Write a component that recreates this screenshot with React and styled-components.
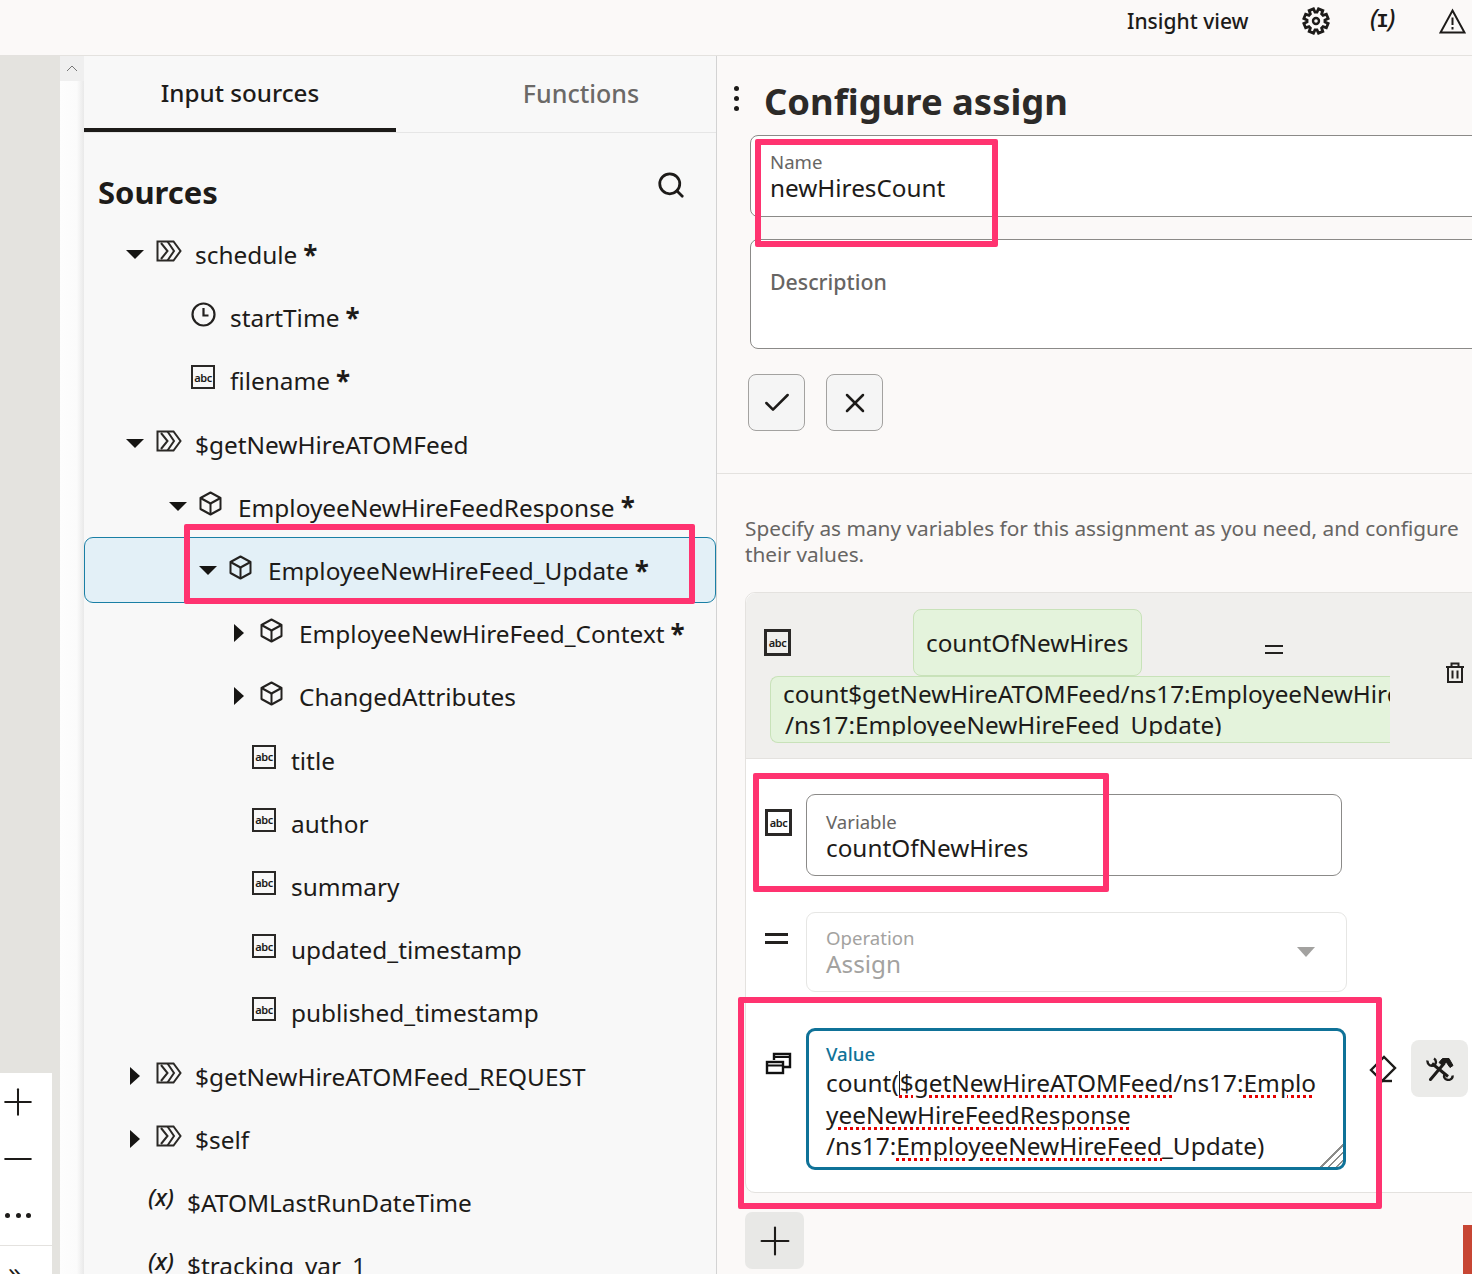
import React from 'react'
import styled, { createGlobalStyle } from 'styled-components'
import { Search, Check, X, Plus, Minus } from 'lucide-react'

const INK = '#1d1b19'
const FONT = '"Noto Sans", "Open Sans", Arial, sans-serif'

const GlobalStyle = createGlobalStyle`
    html, body {
        margin: 0;
        padding: 0;
        background: #fbf9f8;
    }
    body {
        font-family: ${FONT};
        color: ${INK};
        overflow: hidden;
    }
    * { box-sizing: border-box; }
`

/* ---------- icons ---------- */

function SourceIcon() {
    return (
        <svg width="26" height="22" viewBox="0 0 26 22" fill="none" stroke="#2b2926" strokeWidth="2">
            <path d="M1.5 1.5H17.5L24.5 11L17.5 20.5H1.5Z" />
            <path d="M11.5 1.5L18 11L11.5 20.5" />
            <path d="M5 3L11.5 11L5 19" />
        </svg>
    )
}

function CubeIcon() {
    return (
        <svg width="23" height="25" viewBox="0 0 23 25" fill="none" stroke="#23211f" strokeWidth="2" strokeLinejoin="round">
            <path d="M11.5 1.5L21.5 7V18L11.5 23.5L1.5 18V7Z" />
            <path d="M1.5 7L11.5 12.5L21.5 7" />
            <path d="M11.5 12.5V23.5" />
        </svg>
    )
}

function ClockIcon() {
    return (
        <svg width="25" height="25" viewBox="0 0 25 25" fill="none" stroke="#23211f" strokeWidth="2.2">
            <circle cx="12.5" cy="12.5" r="11" />
            <path d="M12.5 6V13.5H17.5" />
        </svg>
    )
}

// toothed outline for the settings cog
function gearPath(teeth, outer, inner, c) {
    const step = (Math.PI * 2) / teeth
    const pts = []
    for (let i = 0; i < teeth; i++) {
        const a = i * step + step / 2
        const at = (r, d) => [c + r * Math.cos(a + d), c + r * Math.sin(a + d)]
        pts.push(at(inner, -step * 0.36), at(outer, -step * 0.24), at(outer, step * 0.24), at(inner, step * 0.36))
    }
    return 'M' + pts.map(p => p[0].toFixed(2) + ' ' + p[1].toFixed(2)).join('L') + 'Z'
}

function GearIcon() {
    return (
        <svg width="28" height="28" viewBox="0 0 28 28" fill="none" stroke="#1d1b19" strokeWidth="2.8" strokeLinejoin="miter">
            <path d={gearPath(8, 12.4, 9, 14)} />
            <circle cx="14" cy="14" r="3" strokeWidth="2.4" />
        </svg>
    )
}

function WarningIcon() {
    return (
        <svg width="27" height="26" viewBox="0 0 27 26" fill="none" stroke="#1d1b19" strokeWidth="2">
            <path d="M13.5 2.5L25.5 24.5H1.5Z" />
            <path d="M13.5 9.5V17" />
            <path d="M13.5 19V21.5" />
        </svg>
    )
}

function TrashIcon() {
    return (
        <svg width="20" height="21" viewBox="0 0 20 21" fill="none" stroke="#23211f" strokeWidth="2">
            <path d="M1 5H19" />
            <path d="M6.5 5V1.5H13.5V5" />
            <path d="M3 5V20H17V5" />
            <path d="M7.5 8.5V16.5M12.5 8.5V16.5" />
        </svg>
    )
}

function StackIcon() {
    return (
        <svg width="27" height="23" viewBox="0 0 27 23" fill="none" stroke="#111" strokeWidth="2.4">
            <path d="M9 8V2H25V15H19" />
            <rect x="2" y="10" width="16" height="11" />
            <path d="M2 13.5H18M9 5H25" strokeWidth="2" />
        </svg>
    )
}

function EraserIcon() {
    return (
        <svg width="28" height="28" viewBox="0 0 28 28" fill="none" stroke="#1d1b19" strokeWidth="2.4" strokeLinejoin="miter">
            <path d="M2 15L15 2L26 13L13 26Z" />
            <path d="M13 26H23" />
        </svg>
    )
}

function ToolsIcon() {
    return (
        <svg width="28" height="24" viewBox="0 0 28 24" fill="none" stroke="#1d1b19" strokeLinejoin="round">
            <path d="M13 5.5L16.5 1.5H23L27 8.5L24 10.5L20.5 5.5H18L16 8Z" fill="#1d1b19" strokeWidth="1" />
            <path d="M18 6.5L4.5 22.5" strokeWidth="3" strokeLinecap="round" />
            <path d="M6 6.5L22 19.5" strokeWidth="3" />
            <path d="M1.5 3.5C1 8 5.5 10 8.5 8C10.5 6.5 10.5 3 8 1.5" strokeWidth="2.4" />
            <path d="M26.5 18.5C27 22.5 22.5 24 19.5 22C17.5 20.5 17.5 18 19.5 16.5" strokeWidth="2.4" />
        </svg>
    )
}

/* ---------- layout ---------- */

const Page = styled.div`
    position: relative;
    width: 1472px;
    height: 1274px;
    overflow: hidden;
    display: flex;
    flex-direction: column;
    background: #fbf9f8;
`

const TopBar = styled.header`
    flex: 0 0 56px;
    display: flex;
    align-items: flex-start;
    border-bottom: 1px solid #e4e2df;
    background: #fbf9f8;
    padding: 6px 0 0 1127px;
    white-space: nowrap;
`

const InsightLabel = styled.span`
    font-size: 21px;
    font-weight: 500;
    line-height: 30px;
    width: 175px;
`

const TopIcon = styled.span`
    display: inline-flex;
    width: ${p => p.$width}px;
    height: 30px;
    align-items: center;
`

const InputGlyph = styled.span`
    font-size: 25px;
    font-style: italic;
    font-weight: 500;
    line-height: 26px;
    margin-top: -4px;
`

const InputSlab = styled.span`
    font-family: "Liberation Mono", monospace;
    font-size: 20px;
    font-style: normal;
    font-weight: 700;
    margin: 0 -1px;
`

const Body = styled.div`
    flex: 1;
    display: flex;
    min-height: 0;
`

const Rail = styled.div`
    flex: 0 0 60px;
    padding-top: 1017px;
    background: #e4e3df;
`

const ZoomPanel = styled.div`
    width: 52px;
    background: #fff;
`

const ZoomButton = styled.div`
    width: 36px;
    height: 57px;
    display: flex;
    align-items: center;
    justify-content: center;
    color: #1d1b19;
    svg { flex: none; }
`

const Dot = styled.i`
    flex: none;
    width: 5px;
    height: 5px;
    border-radius: 50%;
    background: #1d1b19;
`

const DotsRow = styled.span`
    display: flex;
    gap: 5.5px;
`

const ZoomExpand = styled.div`
    border-top: 1px solid #e4e2df;
    margin-top: 1px;
    padding-left: 8px;
    font-size: 26px;
    line-height: 50px;
    height: 46px;
    overflow: hidden;
`

const ScrollTrack = styled.div`
    flex: 0 0 24px;
    background: linear-gradient(90deg, #fdfdfd 0%, #fbfbfb 70%, #e9e9e9 100%);
`

const ScrollUp = styled.div`
    height: 25px;
    background: #efefef;
    display: flex;
    align-items: center;
    justify-content: center;
`

const SourcesPanel = styled.aside`
    flex: 0 0 633px;
    background: #f8f8f8;
    border-right: 1px solid #d3d3d3;
    display: flex;
    flex-direction: column;
    min-height: 0;
`

const Tabs = styled.nav`
    flex: 0 0 77px;
    display: grid;
    grid-template-columns: 312px 1fr;
    border-bottom: 1px solid #e6e6e6;
`

const Tab = styled.div`
    display: flex;
    justify-content: center;
    padding: 20px 0 0 ${p => (p.$active ? 0 : 50)}px;
    font-size: ${p => (p.$active ? 24.2 : 25)}px;
    line-height: 34px;
    font-weight: 500;
    color: ${p => (p.$active ? INK : '#6b6967')};
    border-bottom: ${p => (p.$active ? `4px solid ${INK}` : 'none')};
    height: 76px;
`

const SourcesHead = styled.div`
    flex: 0 0 90px;
    display: flex;
    justify-content: space-between;
    padding: 37px 30px 0 14px;
`

const SourcesTitle = styled.h2`
    margin: 0;
    font-size: 31px;
    line-height: 44px;
    font-weight: 700;
`

const Tree = styled.div`
    flex: 1;
    overflow: hidden;
`

const Row = styled.div`
    position: relative;
    height: 63.2px;
    display: flex;
    align-items: center;
    padding-left: ${p => p.$indent}px;
    font-size: 24.4px;
    white-space: nowrap;
    ${p => p.$selected && `
        &::before {
            content: '';
            position: absolute;
            left: 0;
            right: 0;
            top: -2px;
            bottom: -1px;
            background: #e3f0f7;
            border: 1.5px solid #1a7fa5;
            border-radius: 9px;
        }
        & > * { position: relative; }
    `}
`

const RowLabel = styled.span`
    margin-top: 0;
`

const Twisty = styled.span`
    flex: 0 0 30px;
    display: flex;
    align-items: center;
    height: 20px;
    margin-top: -1px;
`

const ArrowDown = styled.span`
    width: 0;
    height: 0;
    border-left: 9px solid transparent;
    border-right: 9px solid transparent;
    border-top: 9px solid #161513;
`

const ArrowRight = styled.span`
    width: 0;
    height: 0;
    margin-left: 4px;
    border-top: 9px solid transparent;
    border-bottom: 9px solid transparent;
    border-left: 10px solid #161513;
`

const RowIcon = styled.span`
    flex: 0 0 39px;
    display: flex;
    align-items: center;
    margin-top: -7px;
`

const AbcBox = styled.span`
    display: inline-flex;
    align-items: center;
    justify-content: center;
    width: ${p => p.$size || 24}px;
    height: ${p => p.$size || 24}px;
    border: ${p => (p.$size ? 3 : 2.5)}px solid #2a2826;
    font-size: 11px;
    font-weight: 600;
    line-height: 1;
    letter-spacing: -0.4px;
`

const VarGlyph = styled.span`
    font-size: 23.5px;
    font-style: italic;
    font-weight: 500;
    line-height: 28px;
    margin-top: -3px;
`

const Star = styled.b`
    font-size: 26px;
    margin-left: 6px;
    line-height: 20px;
`

/* ---------- right side ---------- */

const ConfigPanel = styled.main`
    flex: 1;
    min-width: 0;
    background: #fbf9f8;
    display: flex;
    flex-direction: column;
    overflow: hidden;
    & > * { flex-shrink: 0; }
`

const TitleRow = styled.div`
    flex: 0 0 79px;
    display: flex;
    align-items: flex-start;
`

const Kebab = styled.span`
    display: flex;
    flex-direction: column;
    gap: 5px;
    width: 47px;
    padding: 30px 0 0 17px;
`

const Title = styled.h1`
    margin: 0;
    font-size: 36.4px;
    line-height: 50px;
    padding-top: 20px;
    font-weight: 700;
    color: #2c2a28;
`

const FormBlock = styled.div`
    flex: 0 0 339px;
    border-bottom: 1px solid #e4e2df;
    padding-left: 33px;
`

const OpenField = styled.div`
    height: ${p => p.$height}px;
    margin-top: ${p => p.$gap || 0}px;
    margin-right: -10px;
    padding: ${p => p.$pad}px 0 0 19px;
    background: #fff;
    border: 1px solid #8b8a88;
    border-radius: 8px;
`

const SmallLabel = styled.div`
    font-size: ${p => p.$size || 18.6}px;
    line-height: 22px;
    color: ${p => p.$color || '#676563'};
    font-weight: ${p => p.$weight || 400};
`

const FieldValue = styled.div`
    font-size: 24.3px;
    line-height: 30px;
    color: ${p => p.$color || INK};
`

const ActionRow = styled.div`
    display: flex;
    gap: 21px;
    margin: 25px 0 0 -2px;
`

const SquareButton = styled.div`
    width: 57px;
    height: 57px;
    display: flex;
    align-items: center;
    justify-content: center;
    background: #f5f5f5;
    border: 1px solid #a3a2a0;
    border-radius: 8px;
`

const Intro = styled.p`
    margin: 41px 0 0 28px;
    font-size: 20.8px;
    line-height: 26px;
    color: #676563;
    width: 725px;
`

const Card = styled.section`
    margin: 25px -10px 0 28px;
    background: #fff;
    border: 1px solid #e4e2df;
    border-radius: 10px 0 0 10px;
    height: 601px;
`

const CardHead = styled.div`
    height: 166px;
    display: grid;
    grid-template-columns: 644px 1fr;
    background: #f0efed;
    border-bottom: 1px solid #e4e2df;
    border-radius: 10px 0 0 0;
    padding-top: 16px;
`

const HeadLeft = styled.div`
    display: flex;
    flex-direction: column;
`

const HeadTop = styled.div`
    display: flex;
    align-items: flex-start;
    padding-left: 18px;
    height: 67px;
`

const HeadIconSlot = styled.span`
    flex: 0 0 149px;
    padding-top: 20px;
`

const Chip = styled.div`
    height: 67px;
    padding: 0 12.5px 0 12px;
    display: flex;
    align-items: center;
    font-size: 24.3px;
    background: #e4f3dc;
    border: 1px solid #c8e2b9;
    border-radius: 8px;
`

const EqualSign = styled.span`
    display: flex;
    flex-direction: column;
    gap: 5px;
    width: ${p => p.$width}px;
    margin: ${p => p.$margin};
`

const EqualBar = styled.i`
    height: ${p => p.$thick}px;
    background: #23211f;
`

const ExpressionChip = styled.div`
    margin-left: 24px;
    height: 67px;
    padding: 1px 0 0 12px;
    background: #e4f3dc;
    border: 1px solid #c8e2b9;
    border-right: none;
    border-radius: 8px 0 0 8px;
    font-size: 24.3px;
    line-height: 31px;
`

const ExpressionClip = styled.div`
    height: 58px;
    overflow: hidden;
`

const ExpressionLine = styled.div`
    white-space: nowrap;
    height: 31px;
    padding-left: ${p => p.$pad || 0}px;
`

const HeadRight = styled.div`
    padding: 53px 0 0 55px;
`

const VarRows = styled.div`
    display: flex;
    flex-direction: column;
    gap: 36px;
    padding: 35px 0 0 19px;
`

const VarRow = styled.div`
    display: grid;
    grid-template-columns: 41px auto 1fr;
    align-items: start;
`

const IconCell = styled.div`
    padding-top: ${p => p.$top}px;
`

const Field = styled.div`
    width: ${p => p.$width}px;
    height: ${p => (p.$disabled ? 80 : 82)}px;
    padding: ${p => (p.$disabled ? 14 : 16)}px 0 0 19px;
    background: #fff;
    border: 1px solid ${p => (p.$disabled ? '#e6e6e4' : '#8b8a88')};
    border-radius: 9px;
    display: flex;
    justify-content: space-between;
`

const OperationArrow = styled.span`
    width: 0;
    height: 0;
    margin: 20px 31px 0 0;
    border-left: 9px solid transparent;
    border-right: 9px solid transparent;
    border-top: 10px solid #a3a2a0;
`

const ValueField = styled.div`
    position: relative;
    width: 540px;
    height: 142px;
    padding: 12px 0 0 17px;
    border: 3px solid #0f7298;
    border-radius: 9px;
    overflow: hidden;
`

const ValueText = styled.div`
    margin-top: 2px;
`

const ValueLine = styled.div`
    font-size: 24.4px;
    line-height: 31.5px;
    white-space: nowrap;
`

const Misspelt = styled.span`
    text-decoration: underline dotted #e60000 3px;
    text-underline-offset: 3px;
`

const Caret = styled.i`
    display: inline-block;
    width: 1px;
    height: 26px;
    margin-bottom: -5px;
    background: #1d1b19;
`

const ResizeGrip = styled.span`
    position: absolute;
    right: 0;
    bottom: 0;
    width: 26px;
    height: 26px;
    background: repeating-linear-gradient(135deg, transparent 0 4px, #8c8c8a 4px 5.5px);
    clip-path: polygon(100% 0, 100% 100%, 0 100%);
`

const ValueActions = styled.div`
    display: flex;
    align-items: flex-start;
    padding: 12px 0 0 23px;
    gap: 14px;
`

const EraserSlot = styled.span`
    padding-top: 15px;
`

const ToolButton = styled.div`
    flex: 0 0 57px;
    height: 57px;
    display: flex;
    align-items: center;
    justify-content: center;
    background: #ebebe9;
    border-radius: 8px;
`

const BottomRow = styled.div`
    display: flex;
    justify-content: space-between;
    padding: 19px 0 0 28px;
`

const AddButton = styled.div`
    width: 59px;
    height: 57px;
    display: flex;
    align-items: center;
    justify-content: center;
    background: #e8e8e6;
    border-radius: 7px;
    svg { flex: none; }
`

const RedTab = styled.div`
    width: 9px;
    height: 60px;
    margin-top: 13px;
    background: #c74634;
`

/* callout boxes painted on top of the screenshot */
const Callout = styled.div`
    position: absolute;
    left: ${p => p.$left}px;
    top: ${p => p.$top}px;
    width: ${p => p.$width}px;
    height: ${p => p.$height}px;
    border: 6px solid #ff3370;
    border-radius: 2px;
    pointer-events: none;
`

const rows = [
    { indent: 42, arrow: 'down', icon: 'source', label: 'schedule', star: true },
    { indent: 107, icon: 'clock', label: 'startTime', star: true },
    { indent: 107, icon: 'abc', label: 'filename', star: true },
    { indent: 42, arrow: 'down', icon: 'source', label: '$getNewHireATOMFeed' },
    { indent: 85, arrow: 'down', icon: 'cube', label: 'EmployeeNewHireFeedResponse', star: true },
    { indent: 115, arrow: 'down', icon: 'cube', label: 'EmployeeNewHireFeed_Update', star: true, selected: true },
    { indent: 146, arrow: 'right', icon: 'cube', label: 'EmployeeNewHireFeed_Context', star: true },
    { indent: 146, arrow: 'right', icon: 'cube', label: 'ChangedAttributes' },
    { indent: 168, icon: 'abc', label: 'title' },
    { indent: 168, icon: 'abc', label: 'author' },
    { indent: 168, icon: 'abc', label: 'summary' },
    { indent: 168, icon: 'abc', label: 'updated_timestamp' },
    { indent: 168, icon: 'abc', label: 'published_timestamp' },
    { indent: 42, arrow: 'right', icon: 'source', label: '$getNewHireATOMFeed_REQUEST' },
    { indent: 42, arrow: 'right', icon: 'source', label: '$self' },
    { indent: 64, icon: 'var', label: '$ATOMLastRunDateTime' },
    { indent: 64, icon: 'var', label: '$tracking_var_1' },
]

function rowIcon(kind) {
    if (kind === 'source') return <SourceIcon />
    if (kind === 'cube') return <CubeIcon />
    if (kind === 'clock') return <ClockIcon />
    if (kind === 'abc') return <AbcBox>abc</AbcBox>
    return <VarGlyph>(x)</VarGlyph>
}

function TreeRow({ row }) {
    return (
        <Row $indent={row.indent} $selected={row.selected}>
            {row.arrow && (
                <Twisty>{row.arrow === 'down' ? <ArrowDown /> : <ArrowRight />}</Twisty>
            )}
            <RowIcon>{rowIcon(row.icon)}</RowIcon>
            <RowLabel>{row.label}</RowLabel>
            {row.star && <Star>*</Star>}
        </Row>
    )
}

export default function App() {
    return (
        <Page>
            <GlobalStyle />
            <TopBar>
                <InsightLabel>Insight view</InsightLabel>
                <TopIcon $width={68}><GearIcon /></TopIcon>
                <TopIcon $width={69}><InputGlyph>(<InputSlab>I</InputSlab>)</InputGlyph></TopIcon>
                <TopIcon $width={27}><WarningIcon /></TopIcon>
            </TopBar>

            <Body>
                <Rail>
                    <ZoomPanel>
                        <ZoomButton><Plus size={44} strokeWidth={1.1} /></ZoomButton>
                        <ZoomButton><Minus size={44} strokeWidth={1.1} /></ZoomButton>
                        <ZoomButton><DotsRow><Dot /><Dot /><Dot /></DotsRow></ZoomButton>
                        <ZoomExpand>»</ZoomExpand>
                    </ZoomPanel>
                </Rail>
                <ScrollTrack>
                    <ScrollUp>
                        <svg width="12" height="7" viewBox="0 0 12 7" fill="none" stroke="#777" strokeWidth="1">
                            <path d="M1 6L6 1L11 6" />
                        </svg>
                    </ScrollUp>
                </ScrollTrack>

                <SourcesPanel>
                    <Tabs>
                        <Tab $active>Input sources</Tab>
                        <Tab>Functions</Tab>
                    </Tabs>
                    <SourcesHead>
                        <SourcesTitle>Sources</SourcesTitle>
                        <Search size={30} strokeWidth={2.2} />
                    </SourcesHead>
                    <Tree>
                        {rows.map(row => <TreeRow key={row.label} row={row} />)}
                    </Tree>
                </SourcesPanel>

                <ConfigPanel>
                    <TitleRow>
                        <Kebab><Dot /><Dot /><Dot /></Kebab>
                        <Title>Configure assign</Title>
                    </TitleRow>

                    <FormBlock>
                        <OpenField $height={82} $pad={15}>
                            <SmallLabel>Name</SmallLabel>
                            <FieldValue>newHiresCount</FieldValue>
                        </OpenField>
                        <OpenField $height={110} $gap={22} $pad={31}>
                            <SmallLabel $size={21.3} $weight={500}>Description</SmallLabel>
                        </OpenField>
                        <ActionRow>
                            <SquareButton><Check size={32} strokeWidth={1.9} /></SquareButton>
                            <SquareButton><X size={32} strokeWidth={1.9} /></SquareButton>
                        </ActionRow>
                    </FormBlock>

                    <Intro>Specify as many variables for this assignment as you need, and configure their values.</Intro>

                    <Card>
                        <CardHead>
                            <HeadLeft>
                                <HeadTop>
                                    <HeadIconSlot><AbcBox $size={27}>abc</AbcBox></HeadIconSlot>
                                    <Chip>countOfNewHires</Chip>
                                    <EqualSign $width={18} $margin="36px 0 0 123.5px">
                                        <EqualBar $thick={2} /><EqualBar $thick={2} />
                                    </EqualSign>
                                </HeadTop>
                                <ExpressionChip>
                                    <ExpressionClip>
                                        <ExpressionLine>count$getNewHireATOMFeed/ns17:EmployeeNewHireFeedResponse</ExpressionLine>
                                        <ExpressionLine $pad={2}>/ns17:EmployeeNewHireFeed_Update)</ExpressionLine>
                                    </ExpressionClip>
                                </ExpressionChip>
                            </HeadLeft>
                            <HeadRight><TrashIcon /></HeadRight>
                        </CardHead>

                        <VarRows>
                            <VarRow>
                                <IconCell $top={15}><AbcBox $size={27}>abc</AbcBox></IconCell>
                                <Field $width={536}>
                                    <div>
                                        <SmallLabel>Variable</SmallLabel>
                                        <FieldValue>countOfNewHires</FieldValue>
                                    </div>
                                </Field>
                            </VarRow>
                            <VarRow>
                                <IconCell $top={21}>
                                    <EqualSign $width={23} $margin="0">
                                        <EqualBar $thick={3} /><EqualBar $thick={3} />
                                    </EqualSign>
                                </IconCell>
                                <Field $width={541} $disabled>
                                    <div>
                                        <SmallLabel $color="#a3a2a0">Operation</SmallLabel>
                                        <FieldValue $color="#a3a2a0">Assign</FieldValue>
                                    </div>
                                    <OperationArrow />
                                </Field>
                            </VarRow>
                            <VarRow>
                                <IconCell $top={24}><StackIcon /></IconCell>
                                <ValueField>
                                    <SmallLabel $color="#0f7298" $weight={500}>Value</SmallLabel>
                                    <ValueText>
                                        <ValueLine>count(<Caret /><Misspelt>$getNewHireATOMFeed</Misspelt>/ns17:<Misspelt>Emplo</Misspelt></ValueLine>
                                        <ValueLine><Misspelt>yeeNewHireFeedResponse</Misspelt></ValueLine>
                                        <ValueLine>/ns17:<Misspelt>EmployeeNewHireFeed</Misspelt>_Update)</ValueLine>
                                    </ValueText>
                                    <ResizeGrip />
                                </ValueField>
                                <ValueActions>
                                    <EraserSlot><EraserIcon /></EraserSlot>
                                    <ToolButton><ToolsIcon /></ToolButton>
                                </ValueActions>
                            </VarRow>
                        </VarRows>
                    </Card>

                    <BottomRow>
                        <AddButton><Plus size={46} strokeWidth={1.1} /></AddButton>
                        <RedTab />
                    </BottomRow>
                </ConfigPanel>
            </Body>

            <Callout $left={755} $top={139} $width={243} $height={108} />
            <Callout $left={184} $top={524} $width={511} $height={80} />
            <Callout $left={753} $top={773} $width={356} $height={119} />
            <Callout $left={738} $top={997} $width={644} $height={212} />
        </Page>
    )
}
